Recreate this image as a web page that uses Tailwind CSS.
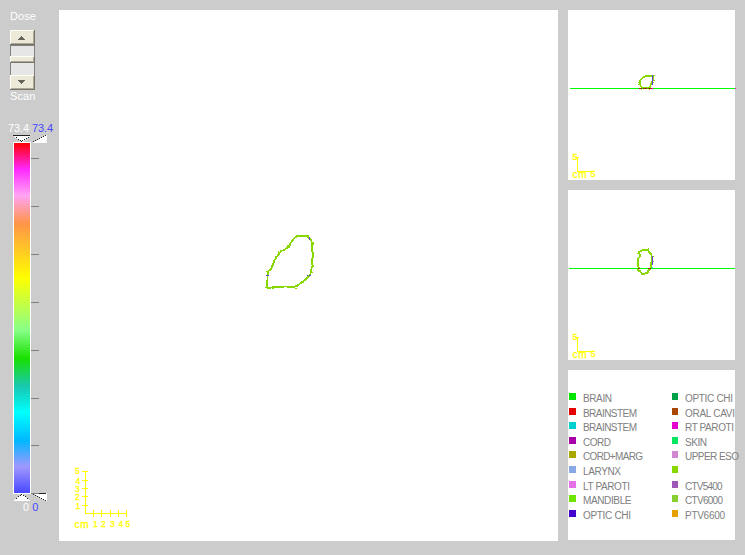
<!DOCTYPE html>
<html lang="en">
<head>
<meta charset="utf-8">
<title>Dose viewer</title>
<script src="https://cdn.jsdelivr.net/npm/@tailwindcss/browser@4"></script>
</head>
<body class="w-[745px] h-[555px] overflow-hidden bg-[#cccccc] font-['Liberation_Sans',Arial,sans-serif]">
<div class="flex h-[555px] w-[745px]">
  <!-- Blend slider and colour scale -->
  <aside class="flex h-full w-[59px] shrink-0 flex-col pt-[10px]">
    <div class="pl-[10px] h-[20px] text-[11px] leading-[13px] tracking-[0.1px] text-white">Dose</div>
    <svg class="ml-[10px] block h-[60px] w-[25px] shrink-0" viewBox="0 0 25 60" shape-rendering="crispEdges">
      <rect width="25" height="60" fill="#808080"/>
      <rect x="1" y="16" width="23" height="29" fill="#e6e6e6"/>
      <g id="up"><rect width="25" height="15" fill="#77756a"/><rect width="24" height="14" fill="#fffff5"/><rect x="1" y="1" width="23" height="13" fill="#aca899"/><rect x="1" y="1" width="22" height="12" fill="#ece9d8"/></g>
      <use href="#up" y="45"/>
      <rect y="26" width="25" height="7" fill="#77756a"/><rect width="24" y="26" height="6" fill="#fffff5"/><rect x="1" y="27" width="23" height="5" fill="#aca899"/><rect x="1" y="27" width="22" height="4" fill="#ece9d8"/>
      <path d="M11 6h1v1h1v1h1v1h1v1H8V9h1V8h1V7h1zM8 50h7v1h-1v1h-1v1h-1v1h-1v-1h-1v-1H9v-1H8z" fill="#66645a"/>
    </svg>
    <div class="pl-[10px] h-[32px] text-[11px] leading-[13px] tracking-[0.1px] text-white">Scan</div>
    <div class="flex h-[12px] gap-[3px] pl-[8px] text-[11px] leading-[12px] tracking-[-0.1px] text-white"><span>73.4</span><span class="text-[#4848ff]">73.4</span></div>
    <svg class="block h-[9px] w-[59px] shrink-0" viewBox="0 134 59 9" shape-rendering="crispEdges">
      <path d="M13 136h18L22 142z" fill="#fff"/><path d="M13 142h18v1H13z" fill="#fff"/><path d="M13 135.500h17" stroke="#222"/>
      <path d="M16 137h1v1h-1zM18 139h1v1h-1zM20 140h1v1h-1zM21 141h1v1h-1zM22 140h1v1h-1zM24 139h1v1h-1zM26 138h1v1h-1zM28 137h1v1h-1z" fill="#222"/>
      <path d="M32 143l15-8v8z" fill="#fff"/><path d="M33 141h1v1h-1zM35 140h1v1h-1zM37 139h1v1h-1zM39 138h1v1h-1zM41 137h1v1h-1zM43 136h1v1h-1zM45 135h1v1h-1z" fill="#222"/>
    </svg>
    <div class="flex h-[350px] shrink-0 pl-[13px]">
      <div class="w-[18px] border-x border-white bg-[linear-gradient(to_bottom,#ff0000_0%,#ff28ff_7.5%,#ffa4f4_15%,#ff9448_23%,#ffff00_38.5%,#88ff88_53.5%,#18e000_61.5%,#18c8b0_69.5%,#00ffff_77%,#00b8ff_85%,#a098ff_92.5%,#4848ff_100%)]"></div>
      <svg class="block h-[350px] w-[8px]" viewBox="0 143 8 350" shape-rendering="crispEdges"><path d="M0 158.500h8M0 206.500h8M0 254.500h8M0 302.500h8M0 350.500h8M0 398.500h8M0 445.500h8" stroke="#808080"/></svg>
    </div>
    <svg class="block h-[9px] w-[59px] shrink-0" viewBox="0 493 59 9" shape-rendering="crispEdges">
      <path d="M13 493h18v1H13z" fill="#fff"/><path d="M13 501l9-7 9 7z" fill="#fff"/>
      <path d="M21 494h1v1h-1zM20 495h1v1h-1zM18 496h1v1h-1zM16 498h1v1h-1zM23 495h1v1h-1zM25 496h1v1h-1zM27 498h1v1h-1z" fill="#222"/>
      <path d="M32 493h15v8z" fill="#fff"/><path d="M31 493.500h8" stroke="#808080"/><path d="M39 493.500h7" stroke="#222"/><path d="M33 494h1v1h-1zM35 495h1v1h-1zM37 496h1v1h-1zM39 497h1v1h-1zM41 498h1v1h-1zM43 499h1v1h-1zM45 500h1v1h-1z" fill="#222"/>
    </svg>
    <div class="-mt-px flex h-[12px] gap-[3px] pl-[23px] text-[11px] leading-[12px] text-white"><span>0</span><span class="text-[#4848ff]">0</span></div>
  </aside>

  <!-- Main slice -->
  <main class="mt-[10px] h-[531px] w-[499px] shrink-0 bg-white">
    <svg class="block h-[531px] w-[499px]" viewBox="59 10 499 531" shape-rendering="crispEdges">
      <path fill="none" stroke="#88d800" stroke-width="1.800" d="M267.500 288L267.500 275L268.500 271L271 269L273 265L274 261L276 258L279 254L281 251L284 250L287 248L289.500 247L290 244L292 241L294 238.500L297 236L307 236L309 238L311 240L312 243L312 250L313 255L312 260L312.500 266L311 270L310.500 274L308 277L305 280L301 283L297 286L293 287L286 286.500L277 287L271 287.500L267.500 288.500"/>
      <path fill="#88d800" d="M266 271h2v1h-2zM271 265h2v1h-2zM275 256h1v2h-1zM299 234.500h2v1h-2zM307 235h2v1h-2zM313 242h1v3h-1zM313 252h1v6h-1zM313 265h1v2h-1zM311 272h2v1h-2zM266 280h1v8h-1zM265 287h2v1h-2zM272 288h2v1h-2zM295 288h2v1h-2zM303 280h1v3h-1zM287 245h2v2h-2zM278 251h1v3h-1z"/>
      <path d="M309.500 237v3M266 275.500h3M307 275.500h1M309 275.500h2" stroke="#6040e0"/>
      <g stroke="#ffff00" fill="none"><path d="M85.500 471v42.500H127M82 471.500h6M82 480.500h6M82 488.500h6M82 496.500h6M82 505.500h6M93.500 510v7M101.500 510v7M110.500 510v7M118.500 510v7M126.500 510v7"/></g>
      <g class="text-[8.5px] leading-[8px]" fill="#ffff00" stroke="#ffff00" stroke-width=".3">
        <text x="75" y="474">5</text><text x="75.500" y="483.500">4</text><text x="75" y="491.500">3</text><text x="75" y="500">2</text><text x="75.500" y="508.500">1</text>
        <text x="93" y="527">1</text><text x="101" y="527">2</text><text x="110" y="527">3</text><text x="118.500" y="527">4</text><text x="125.500" y="527">5</text>
        <text x="74.500" y="528" textLength="14" class="text-[10px]">cm</text>
      </g>
    </svg>
  </main>

  <!-- Orthogonal views and structure legend -->
  <section class="ml-[10px] mt-[10px] flex w-[171px] shrink-0 flex-col gap-[10px]">
    <div class="h-[170px] w-[167px] bg-white">
      <svg class="block h-[170px] w-[168px]" viewBox="568 10 168 170" shape-rendering="crispEdges">
        <path fill="none" stroke="#88d800" stroke-width="1.800" d="M641 87L640 84L640 81L641.500 79L643 77.500L646 76L652 76L653.500 77L653.500 80L652 82L651 84L650 87.500L641 87.500"/>
        <path stroke="#88d800" d="M641 89.500h1M653 75.500h2M654 80.500h1M653 82.500h1M638 82.500h1M638 84.500h2M649 89.500h1M645 75.500h2"/>
        <path d="M652.500 75v9.500" stroke="#6040e0"/>
        <path d="M570 88.500h165" stroke="#00ff00"/><path d="M639 88.500h3M643 88.500h4M648 88.500h4" stroke="#a02000"/><path d="M652 88.500h1M735 88.500h1" stroke="#ff00e0"/>
        <g id="axis"><path d="M575 157.500h4M577.500 157v14.500H595" fill="none" stroke="#ffff00"/>
        <g fill="#ffff00" stroke="#ffff00" stroke-width=".3"><text x="572.500" y="160" class="text-[9px]">5</text><text x="572.500" y="177.500" textLength="14" class="text-[10px]">cm</text><text x="590.500" y="176.500" class="text-[9px]">5</text></g></g>
      </svg>
    </div>
    <div class="h-[170px] w-[167px] bg-white">
      <svg class="block h-[170px] w-[167px]" viewBox="568 190 167 170" shape-rendering="crispEdges">
        <path fill="none" stroke="#88d800" stroke-width="1.900" d="M639 268l-1-3v-6l2-3-1-4 2-1 2-1 5-.5 1 3 2 1 1 4v4l-1 2v4l-1 2-2 1v2l-3 1-3 .500-2-3-2-1z"/>
        <path stroke="#88d800" d="M637 253.500h2M637 264.500h1M653 256.500h1M653 261.500h1M641 274.500h4M638 271.500h1M646 273.500h2"/>
        <path d="M652.500 256v9" stroke="#6040e0"/>
        <path d="M569 268.500h166" stroke="#00ff00"/><path d="M638 268.500h2M648 268.500h3" stroke="#a02000"/><path d="M652.500 267v1" stroke="#50c0ff"/>
        <use href="#axis" y="180"/>
      </svg>
    </div>
    <div id="legend" class="grid h-[170px] w-[167px] grid-cols-[103px_63px] grid-rows-[repeat(9,14.6px)] bg-white pl-px pt-[22px]"></div>
  </section>
</div>
<script>
  // [label, swatch colour, drawn width in px]
  const rows = [
    ['BRAIN','#00e600',29],['OPTIC CHI','#00a048',48],
    ['BRAINSTEM','#e60000',54],['ORAL CAVI','#a84800',50],
    ['BRAINSTEM','#00d0d0',54],['RT PAROTI','#e600d0',49],
    ['CORD','#a800a8',28],['SKIN','#00e660',22],
    ['CORD+MARG','#a8a800',60],['UPPER ESO','#d088d0',54],
    ['LARYNX','#88a8e6',38],['','#88d800',0],
    ['LT PAROTI','#e670e6',47],['CTV5400','#a058b8',37.5],
    ['MANDIBLE','#70e600',48.5],['CTV6000','#88d030',38],
    ['OPTIC CHI','#4400cc',48],['PTV6600','#e6a000',40]
  ];
  document.getElementById('legend').innerHTML = rows.map(([label, color, width], i) =>
    `<div class="flex h-[14px] items-start"><i class="mt-px block h-[7px] shrink-0 ${i % 2 ? 'w-[6px]' : 'w-[7px]'}" style="background:${color}"></i>` +
    `<svg class="ml-[7px] block h-[14px] w-[50px] shrink-0 overflow-visible" viewBox="0 0 50 14"><text x="0" y="10" class="text-[10px]" fill="#808080" ${width ? `textLength="${width}"` : ''}>${label}</text></svg></div>`
  ).join('');
</script>
</body>
</html>
